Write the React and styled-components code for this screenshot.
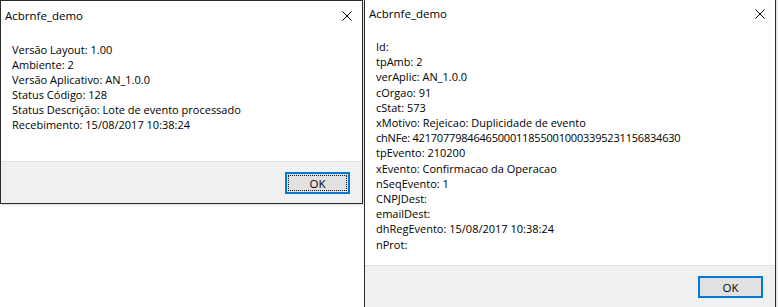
import React from "react";
import styled, { createGlobalStyle } from "styled-components";

const Global = createGlobalStyle`
  html, body { margin: 0; padding: 0; background: #ffffff; overflow: hidden; }
  body { font-family: "Segoe UI", "Open Sans", "Noto Sans", sans-serif; }
`;

const Screen = styled.div`
  display: flex;
  align-items: flex-start;
  gap: 1px;
  width: 778px;
  height: 307px;
  overflow: hidden;
`;

const Dialog = styled.div`
  box-sizing: border-box;
  width: ${(p) => p.$w}px;
  height: ${(p) => p.$h}px;
  margin-top: ${(p) => p.$top || 0}px;
  border: 1px solid #2b2b2b;
  background: #ffffff;
  display: flex;
  flex-direction: column;
  flex-shrink: 0;
  box-shadow: 1px 1px 2px rgba(0, 0, 0, 0.15);
`;

const TitleBar = styled.div`
  height: 29px;
  display: flex;
  align-items: center;
  justify-content: space-between;
  padding: 0 10px 0 4px;
  font-size: 11.5px;
  color: #000;
`;

const CloseIcon = styled.svg`
  width: 10px;
  height: 10px;
  display: block;
`;

const Body = styled.div`
  flex: 1;
  padding: ${(p) => p.$pt}px 11px 0 11px;
  font-size: 11px;
  line-height: ${(p) => p.$lh}px;
  color: #000;
`;

const Line = styled.div`
  white-space: nowrap;
  letter-spacing: ${(p) => (p.$tight ? "-0.2px" : "normal")};
`;

const Footer = styled.div`
  height: ${(p) => p.$h}px;
  background: #f0f0f0;
  border-top: 1px solid #dfdfdf;
  display: flex;
  justify-content: flex-end;
  align-items: flex-start;
  padding: 10px 12px 0 0;
  box-sizing: border-box;
`;

const OkButton = styled.button`
  box-sizing: border-box;
  width: 65px;
  height: 22px;
  background: #e1e1e1;
  border: 2px solid #0078d7;
  font-family: inherit;
  font-size: 11.5px;
  color: #000;
  padding: 0;
  outline: ${(p) => (p.$focus ? "1px dotted #111" : "none")};
  outline-offset: -4px;
`;

const leftLines = [
  "Versão Layout: 1.00",
  "Ambiente: 2",
  "Versão Aplicativo: AN_1.0.0",
  "Status Código: 128",
  "Status Descrição: Lote de evento processado",
  "Recebimento: 15/08/2017 10:38:24",
];

const rightLines = [
  "Id:",
  "tpAmb: 2",
  "verAplic: AN_1.0.0",
  "cOrgao: 91",
  "cStat: 573",
  "xMotivo: Rejeicao: Duplicidade de evento",
  "chNFe: 42170779846465000118550010003395231156834630",
  "tpEvento: 210200",
  "xEvento: Confirmacao da Operacao",
  "nSeqEvento: 1",
  "CNPJDest:",
  "emailDest:",
  "dhRegEvento: 15/08/2017 10:38:24",
  "nProt:",
];

const Close = () => (
  <CloseIcon viewBox="0 0 10 10">
    <path d="M0.5 0.5 L9.5 9.5 M9.5 0.5 L0.5 9.5" stroke="#000" strokeWidth="1" fill="none" />
  </CloseIcon>
);

const MessageBox = ({ w, h, top, pt, lh, footerH, lines, focus }) => (
  <Dialog $w={w} $h={h} $top={top}>
    <TitleBar>
      <span>Acbrnfe_demo</span>
      <Close />
    </TitleBar>
    <Body $pt={pt} $lh={lh}>
      {lines.map((l) => (
        <Line key={l} $tight={/\d{20,}/.test(l)}>
          {l}
        </Line>
      ))}
    </Body>
    <Footer $h={footerH}>
      <OkButton $focus={focus}>OK</OkButton>
    </Footer>
  </Dialog>
);

export default function App() {
  return (
    <>
      <Global />
      <Screen>
        <MessageBox w={363} h={204} top={0} pt={12} lh={15} footerH={42} lines={leftLines} focus />
        <MessageBox w={412} h={312} top={-2} pt={11} lh={15.2} footerH={44} lines={rightLines} />
      </Screen>
    </>
  );
}
